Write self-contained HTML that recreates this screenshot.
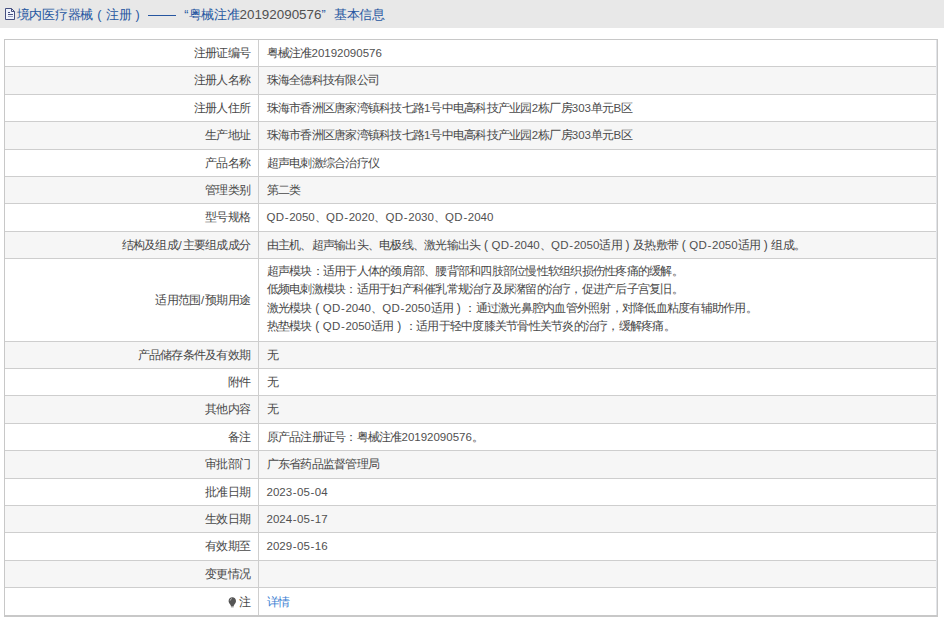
<!DOCTYPE html>
<html><head><meta charset="utf-8">
<style>
html,body{margin:0;padding:0;background:#fff;width:944px;height:623px;overflow:hidden;}
body{font-family:"Liberation Sans",sans-serif;font-size:12px;letter-spacing:-0.75px;color:#484848;position:relative;-webkit-text-stroke:0px #4a4a4a;}
i{font-style:normal}
.n{font-size:11.5px;letter-spacing:0px;color:#505050;-webkit-text-stroke:0}
.sl{font-size:11.5px;letter-spacing:0.8px;margin-left:0.7px}
.hy{letter-spacing:0.55px;margin-left:0.55px}
.qd{letter-spacing:0.25px}
.p{display:inline-block;width:11.25px;text-align:center;letter-spacing:0}
.q1{display:inline-block;width:1em;text-align:right;letter-spacing:0}
.q2{display:inline-block;width:1em;text-align:left;letter-spacing:0}
.hd{position:absolute;left:0;top:0;width:944px;height:28px;background:#e8e8e8;color:#2656a0;-webkit-text-stroke:0px #2656a0;font-size:12.5px;letter-spacing:-0.25px;line-height:28px;white-space:nowrap;}
.hd .n{font-size:13.4px;letter-spacing:0}
.hd .p{width:12.75px}
.hd .t{position:absolute;left:16.5px;top:1px;}
.hd svg{position:absolute;left:5px;top:8px;}
.dash{display:inline-block;width:32px;height:28px;vertical-align:top;position:relative;letter-spacing:0}
.dash:after{content:"";position:absolute;left:4px;right:0;top:14px;height:1px;background:#2656a0}
.bg{position:absolute;left:5px;width:931px;background:#f6f6f6;}
.hl{position:absolute;left:5px;width:931px;height:1px;background:#cecece;}
.bd{position:absolute;background:#c8c8c8;}
.l{position:absolute;right:694px;white-space:nowrap;line-height:16px;}
.v{position:absolute;left:266.5px;white-space:nowrap;line-height:16px;}
a{color:#3a80d2;text-decoration:none;}
</style></head><body>
<div class="hd"><svg width="11" height="13" viewBox="0 0 11 13"><path d="M.5.5h6l3 3v8h-9z" fill="#eef2fc" stroke="#454f7f" stroke-width="1"/><path d="M6.5.5v3h3" fill="none" stroke="#454f7f" stroke-width="1"/><path d="M3 4.5h2M3 6.5h5" stroke="#454f7f" stroke-width="1"/><path d="M3 8.5h5" stroke="#454f7f" stroke-opacity=".5" stroke-width="1"/></svg><span class="t">境内医疗器械<i class="p">(</i>注册<i class="p">)</i><i class="dash"></i><i class="q1">“</i>粤械注准<i class="n">20192090576</i><i class="q2">”</i>基本信息</span></div>
<div class="l" style="top:44.5px">注册证编号</div>
<div class="v" style="top:44.5px">粤械注准<i class="n">20192090576</i></div>
<div class="bg" style="top:67px;height:27px"></div>
<div class="hl" style="top:66px"></div>
<div class="l" style="top:72px">注册人名称</div>
<div class="v" style="top:72px">珠海全德科技有限公司</div>
<div class="hl" style="top:94px"></div>
<div class="l" style="top:99.5px">注册人住所</div>
<div class="v" style="top:99.5px">珠海市香洲区唐家湾镇科技七路<i class="n">1</i>号中电高科技产业园<i class="n">2</i>栋厂房<i class="n">303</i>单元<i class="n">B</i>区</div>
<div class="bg" style="top:122px;height:27px"></div>
<div class="hl" style="top:121px"></div>
<div class="l" style="top:127px">生产地址</div>
<div class="v" style="top:127px">珠海市香洲区唐家湾镇科技七路<i class="n">1</i>号中电高科技产业园<i class="n">2</i>栋厂房<i class="n">303</i>单元<i class="n">B</i>区</div>
<div class="hl" style="top:149px"></div>
<div class="l" style="top:154.5px">产品名称</div>
<div class="v" style="top:154.5px">超声电刺激综合治疗仪</div>
<div class="bg" style="top:177px;height:26px"></div>
<div class="hl" style="top:176px"></div>
<div class="l" style="top:181.5px">管理类别</div>
<div class="v" style="top:181.5px">第二类</div>
<div class="hl" style="top:203px"></div>
<div class="l" style="top:209px">型号规格</div>
<div class="v" style="top:209px"><i class="n"><i class="qd">QD</i><i class="hy">-</i>2050</i>、<i class="n"><i class="qd">QD</i><i class="hy">-</i>2020</i>、<i class="n"><i class="qd">QD</i><i class="hy">-</i>2030</i>、<i class="n"><i class="qd">QD</i><i class="hy">-</i>2040</i></div>
<div class="bg" style="top:232px;height:26px"></div>
<div class="hl" style="top:231px"></div>
<div class="l" style="top:236.5px">结构及组成<i class="sl">/</i>主要组成成分</div>
<div class="v" style="top:236.5px">由主机、超声输出头、电极线、激光输出头<i class="p">(</i><i class="n"><i class="qd">QD</i><i class="hy">-</i>2040</i>、<i class="n"><i class="qd">QD</i><i class="hy">-</i>2050</i>适用<i class="p">)</i>及热敷带<i class="p">(</i><i class="n"><i class="qd">QD</i><i class="hy">-</i>2050</i>适用<i class="p">)</i>组成。</div>
<div class="hl" style="top:258px"></div>
<div class="l" style="top:291.5px">适用范围<i class="sl">/</i>预期用途</div>
<div class="v" style="top:262px;line-height:18.3px">超声模块：适用于人体的颈肩部、腰背部和四肢部位慢性软组织损伤性疼痛的缓解。<br>低频电刺激模块：适用于妇产科催乳常规治疗及尿潴留的治疗，促进产后子宫复旧。<br>激光模块<i class="p">(</i><i class="n"><i class="qd">QD</i><i class="hy">-</i>2040</i>、<i class="n"><i class="qd">QD</i><i class="hy">-</i>2050</i>适用<i class="p">)</i>：通过激光鼻腔内血管外照射，对降低血粘度有辅助作用。<br>热垫模块<i class="p">(</i><i class="n"><i class="qd">QD</i><i class="hy">-</i>2050</i>适用<i class="p">)</i>：适用于轻中度膝关节骨性关节炎的治疗，缓解疼痛。</div>
<div class="bg" style="top:342px;height:26px"></div>
<div class="hl" style="top:341px"></div>
<div class="l" style="top:346.5px">产品储存条件及有效期</div>
<div class="v" style="top:346.5px">无</div>
<div class="hl" style="top:368px"></div>
<div class="l" style="top:373.5px">附件</div>
<div class="v" style="top:373.5px">无</div>
<div class="bg" style="top:396px;height:27px"></div>
<div class="hl" style="top:395px"></div>
<div class="l" style="top:401px">其他内容</div>
<div class="v" style="top:401px">无</div>
<div class="hl" style="top:423px"></div>
<div class="l" style="top:428.5px">备注</div>
<div class="v" style="top:428.5px">原产品注册证号：粤械注准<i class="n">20192090576</i>。</div>
<div class="bg" style="top:451px;height:27px"></div>
<div class="hl" style="top:450px"></div>
<div class="l" style="top:456px">审批部门</div>
<div class="v" style="top:456px">广东省药品监督管理局</div>
<div class="hl" style="top:478px"></div>
<div class="l" style="top:483.5px">批准日期</div>
<div class="v" style="top:483.5px"><i class="n">2023<i class="hy">-</i>05<i class="hy">-</i>04</i></div>
<div class="bg" style="top:506px;height:26px"></div>
<div class="hl" style="top:505px"></div>
<div class="l" style="top:510.5px">生效日期</div>
<div class="v" style="top:510.5px"><i class="n">2024<i class="hy">-</i>05<i class="hy">-</i>17</i></div>
<div class="hl" style="top:532px"></div>
<div class="l" style="top:538px">有效期至</div>
<div class="v" style="top:538px"><i class="n">2029<i class="hy">-</i>05<i class="hy">-</i>16</i></div>
<div class="bg" style="top:561px;height:26px"></div>
<div class="hl" style="top:560px"></div>
<div class="l" style="top:565.5px">变更情况</div>
<div class="v" style="top:565.5px"></div>
<div class="hl" style="top:587px"></div>
<div class="l" style="top:594px"><svg width="9" height="11" viewBox="0 0 9 11" style="vertical-align:-2px;margin-right:2px"><path d="M4.3.3C6.4.3 8 1.9 8 4c0 1.6-.9 2.5-1.6 3.6L5.6 9H3L2.2 7.6C1.5 6.5.6 5.6.6 4 .6 1.9 2.2.3 4.3.3z" fill="#555"/><rect x="2.9" y="9.3" width="2.8" height="1" fill="#777"/><path d="M2.2 3.6C2.3 2.5 3 1.8 4 1.6" stroke="#fff" stroke-opacity=".7" stroke-width=".8" fill="none"/></svg>注</div>
<div class="v" style="top:594px"><a>详情</a></div>
<div class="bd" style="left:4px;top:39px;width:934px;height:1px"></div>
<div class="bd" style="left:4px;top:39px;width:1px;height:578px"></div>
<div class="bd" style="left:937px;top:39px;width:1px;height:578px"></div>
<div style="position:absolute;left:936px;top:40px;width:1px;height:575px;background:#e2e4e8"></div>
<div class="bd" style="left:4px;top:615px;width:934px;height:2px"></div>
<div class="hl" style="left:258px;top:40px;width:1px;height:575px"></div>
</body></html>
